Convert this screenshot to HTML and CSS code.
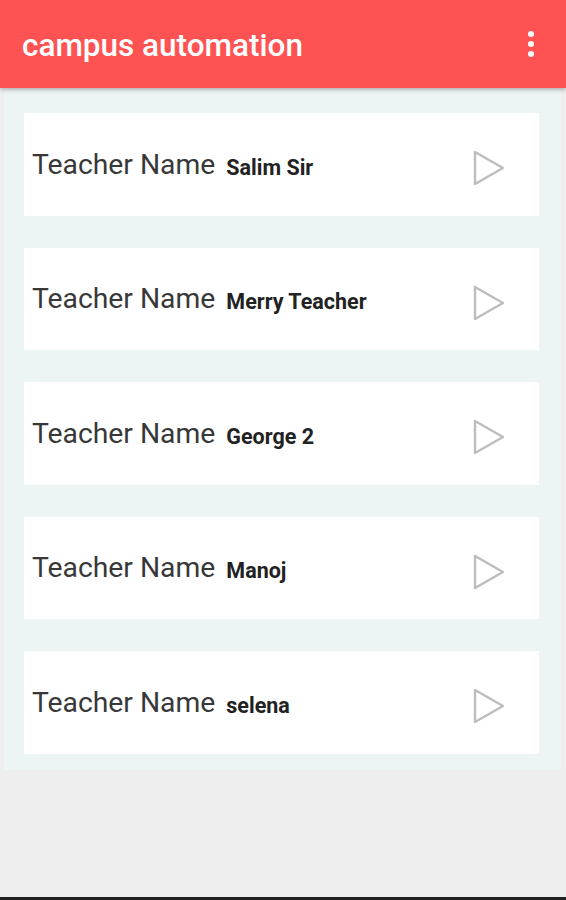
FILE: index.html
```html
<!DOCTYPE html>
<html lang="en">
<head>
    <meta charset="UTF-8">
    <meta name="viewport" content="width=device-width, initial-scale=1.0">
    <title>campus automation</title>
    <link rel="stylesheet" href="styles.css">
</head>
<body>
    <div class="toolbar">
        <div class="title">campus automation</div>
        <div class="menu">
            <span class="dot"></span>
            <span class="dot"></span>
            <span class="dot"></span>
        </div>
    </div>

    <div class="panel">
        <div class="card">
            <span class="label">Teacher Name</span>
            <span class="name">Salim Sir</span>
            <svg class="play" width="32" height="36" viewBox="0 0 32 36"><path d="M2 2 L30 18 L2 34 Z" fill="none" stroke="#bdbdbd" stroke-width="2.4" stroke-linejoin="round"/></svg>
        </div>
        <div class="card">
            <span class="label">Teacher Name</span>
            <span class="name">Merry Teacher</span>
            <svg class="play" width="32" height="36" viewBox="0 0 32 36"><path d="M2 2 L30 18 L2 34 Z" fill="none" stroke="#bdbdbd" stroke-width="2.4" stroke-linejoin="round"/></svg>
        </div>
        <div class="card">
            <span class="label">Teacher Name</span>
            <span class="name">George 2</span>
            <svg class="play" width="32" height="36" viewBox="0 0 32 36"><path d="M2 2 L30 18 L2 34 Z" fill="none" stroke="#bdbdbd" stroke-width="2.4" stroke-linejoin="round"/></svg>
        </div>
        <div class="card">
            <span class="label">Teacher Name</span>
            <span class="name">Manoj</span>
            <svg class="play" width="32" height="36" viewBox="0 0 32 36"><path d="M2 2 L30 18 L2 34 Z" fill="none" stroke="#bdbdbd" stroke-width="2.4" stroke-linejoin="round"/></svg>
        </div>
        <div class="card">
            <span class="label">Teacher Name</span>
            <span class="name">selena</span>
            <svg class="play" width="32" height="36" viewBox="0 0 32 36"><path d="M2 2 L30 18 L2 34 Z" fill="none" stroke="#bdbdbd" stroke-width="2.4" stroke-linejoin="round"/></svg>
        </div>
    </div>

    <div class="navbar"></div>
</body>
</html>
```

FILE: styles.css
```css
* {
    margin: 0;
    padding: 0;
    box-sizing: border-box;
}

body {
    font-family: Roboto, 'Noto Sans', sans-serif;
    background: #eeeeee;
    width: 566px;
    height: 900px;
    display: flex;
    flex-direction: column;
    overflow: hidden;
}

.toolbar {
    height: 88px;
    background: #ff5252;
    display: flex;
    align-items: center;
    justify-content: space-between;
    padding: 0 32px 0 22px;
    box-shadow: 0 2px 4px rgba(0,0,0,0.25);
    position: relative;
    z-index: 1;
}

.title {
    color: white;
    font-size: 31.5px;
    font-weight: 500;
    margin-top: 2px;
}

.menu {
    display: flex;
    flex-direction: column;
    gap: 4px;
    margin-top: -1px;
}

.dot {
    width: 6px;
    height: 6px;
    border-radius: 50%;
    background: white;
}

.panel {
    background: #edf4f4;
    margin: 2px 5px 0 4px;
    padding: 23px 22px 16px 20px;
    display: flex;
    flex-direction: column;
    gap: 32px;
}

.card {
    background: white;
    height: 102.5px;
    display: flex;
    align-items: center;
    padding: 0 34px 0 8px;
}

.label {
    font-size: 28.3px;
    color: #383838;
    margin-top: 0;
}

.name {
    font-size: 21.5px;
    font-weight: bold;
    color: #222;
    margin-left: 11px;
    margin-top: 6px;
    flex: 1;
}

.play {
    display: block;
    margin-top: 8px;
}

.navbar {
    margin-top: auto;
    height: 3px;
    background: #222;
}
```
